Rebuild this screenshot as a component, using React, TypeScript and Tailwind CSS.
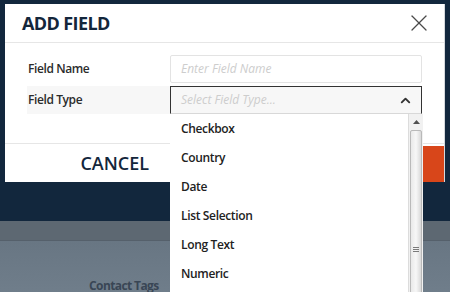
import { X, ChevronUp } from "lucide-react";

const types = ["Checkbox", "Country", "Date", "List Selection", "Long Text", "Numeric"];

const Scrollbar = () => (
  <div className="w-[15px] shrink-0 flex flex-col bg-[#f1f1f1] border-l border-[#dcdcdc]">
    <div className="h-[16px] flex items-center justify-center">
      <svg width="7" height="4" viewBox="0 0 7 4">
        <path d="M0 4 L3.5 0 L7 4 Z" fill="#505050" />
      </svg>
    </div>
    <div className="flex-1 mx-[1px] rounded-t-[2px] border border-[#b9b9b9] bg-gradient-to-r from-[#e9e9e9] via-[#f7f7f7] to-[#d9d9d9] flex flex-col items-center pt-[116px]">
      <div className="w-[6px] flex flex-col gap-[1px]">
        <div className="h-px bg-[#7a7a7a]" />
        <div className="h-px bg-[#7a7a7a]" />
        <div className="h-px bg-[#7a7a7a]" />
      </div>
    </div>
  </div>
);

export default function App() {
  return (
    <div className="relative w-[450px] h-[292px] overflow-hidden bg-[#12273d] font-['Open_Sans',sans-serif]">
      {/* page behind the dialog */}
      <div className="flex flex-col h-full">
        <div className="h-[221px] shrink-0" />
        <div className="h-[20px] shrink-0 bg-[#5d6872] border-b border-[#55606b]" />
        <div className="flex-1 bg-gradient-to-b from-[#687683] to-[#707e8b] pl-[89px] pt-[31px]">
          <span className="text-[12px] font-bold tracking-[-0.6px] text-[#394655]">Contact Tags</span>
        </div>
      </div>

      {/* dialog */}
      <div className="absolute left-[5px] top-[4px] w-[440px] bg-white border-r border-[#d5d9dd]">
        <div className="h-[39px] flex items-center justify-between pl-[17px] pr-[11px] border-b border-[#e6e6e6]">
          <h2 className="text-[18px] font-bold text-[#13263b] tracking-[-0.6px]">ADD FIELD</h2>
          <X className="w-[28px] h-[28px] text-[#4a4a4a]" strokeWidth={1.1} />
        </div>
        <div className="px-[22px] pt-[12px] pb-[29px] flex flex-col gap-[3px]">
          <div className="flex h-[28px]">
            <div className="w-[143px] flex items-center pl-[1px] text-[12px] font-semibold tracking-[-0.4px] text-[#2b2b2b]">Field Name</div>
            <div className="flex-1 border border-[#e3e3e3] rounded-[2px] flex items-center pl-[10px] text-[12px] italic text-[#cdcdcd]">
              Enter Field Name
            </div>
          </div>
          <div className="flex h-[28px]">
            <div className="w-[143px] flex items-center pl-[1px] bg-[#f7f7f7] text-[12px] font-semibold tracking-[-0.4px] text-[#2b2b2b]">Field Type</div>
            <div className="flex-1 border border-[#333] border-b-[#d8d8d8] bg-[#f7f7f7] flex items-center justify-between pl-[10px] pr-[8px] text-[12px] italic text-[#cdcdcd]">
              <span>Select Field Type...</span>
              <ChevronUp className="w-[15px] h-[15px] text-[#333]" strokeWidth={3} />
            </div>
          </div>
        </div>
        <div className="grid grid-cols-2 h-[39px] border-t border-[#e6e6e6]">
          <div className="flex items-center justify-center text-[18px] font-semibold text-[#13263b]">CANCEL</div>
          <div className="mt-[2px] bg-[#d8461a]" />
        </div>
      </div>

      {/* open select list */}
      <div className="absolute left-[170px] top-[114px] w-[253px] h-[190px] bg-white flex">
        <ul className="flex-1">
          {types.map((t) => (
            <li key={t} className="h-[29px] flex items-center pl-[11px] text-[12px] font-semibold tracking-[-0.35px] text-[#222]">
              {t}
            </li>
          ))}
        </ul>
        <Scrollbar />
      </div>
    </div>
  );
}
